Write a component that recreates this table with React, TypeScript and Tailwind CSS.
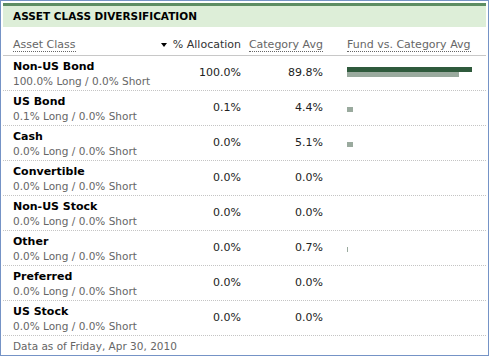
import React from 'react'

type Row = { name: string; long: string; short: string; alloc: number; cat: number }

const rows: Row[] = [
  { name: 'Non-US Bond', long: '100.0', short: '0.0', alloc: 100.0, cat: 89.8 },
  { name: 'US Bond', long: '0.1', short: '0.0', alloc: 0.1, cat: 4.4 },
  { name: 'Cash', long: '0.0', short: '0.0', alloc: 0.0, cat: 5.1 },
  { name: 'Convertible', long: '0.0', short: '0.0', alloc: 0.0, cat: 0.0 },
  { name: 'Non-US Stock', long: '0.0', short: '0.0', alloc: 0.0, cat: 0.0 },
  { name: 'Other', long: '0.0', short: '0.0', alloc: 0.0, cat: 0.7 },
  { name: 'Preferred', long: '0.0', short: '0.0', alloc: 0.0, cat: 0.0 },
  { name: 'US Stock', long: '0.0', short: '0.0', alloc: 0.0, cat: 0.0 },
]

const BAR_MAX = 125

function Bars({ alloc, cat }: { alloc: number; cat: number }) {
  const a = Math.round((alloc / 100) * BAR_MAX)
  const c = Math.max(cat > 0 ? 1 : 0, Math.round((cat / 100) * BAR_MAX))
  return (
    <div className="flex flex-col pt-[11px]">
      <div className="h-[5px] bg-[#2f5a3c]" style={{ width: a }} />
      <div className="h-[5px] bg-[#9aaa9e]" style={{ width: c }} />
    </div>
  )
}

export default function App() {
  return (
    <div className="w-[489px] h-[356px] bg-white border border-[#7593c6] px-[2px] pt-[2px] font-['DejaVu_Sans',Verdana,sans-serif] text-[11px] text-[#222] overflow-hidden">
      <div className="h-[24px] border-t-[3px] border-[#5d8d63] bg-[#ddeed8] pl-[10px] pt-[1px] flex items-center">
        <span className="font-bold text-[10.5px] text-black">ASSET CLASS DIVERSIFICATION</span>
      </div>

      <div className="flex items-end h-[29px] pb-[2px] border-b border-[#c8c8c8] text-[#666]">
        <div className="flex-1 pl-[10px]">
          <span className="border-b border-dotted border-[#666]">Asset Class</span>
        </div>
        <div className="w-[82px] flex items-center justify-end gap-[6px]">
          <span className="inline-block w-0 h-0 border-l-[3px] border-r-[3px] border-t-[4px] border-l-transparent border-r-transparent border-t-black" />
          <span className="text-[#333]">% Allocation</span>
        </div>
        <div className="w-[82px] text-right">
          <span className="border-b border-dotted border-[#666]">Category Avg</span>
        </div>
        <div className="w-[163px] pl-[24px]">
          <span className="border-b border-dotted border-[#666]">Fund vs. Category Avg</span>
        </div>
      </div>

      {rows.map(r => (
        <div key={r.name} className="flex h-[35px] border-b border-dotted border-[#c4c4c4]">
          <div className="flex-1 pl-[10px] pt-[4px] leading-[14px]">
            <div className="font-bold text-black text-[11px]">{r.name}</div>
            <div className="text-[#666] text-[10.5px]">{r.long}% Long / {r.short}% Short</div>
          </div>
          <div className="w-[82px] text-right self-center">{r.alloc.toFixed(1)}%</div>
          <div className="w-[82px] text-right self-center">{r.cat.toFixed(1)}%</div>
          <div className="w-[163px] pl-[24px]">
            <Bars alloc={r.alloc} cat={r.cat} />
          </div>
        </div>
      ))}

      <div className="pl-[10px] pt-[3px] text-[#666] text-[10.5px]">Data as of Friday, Apr 30, 2010</div>
    </div>
  )
}
